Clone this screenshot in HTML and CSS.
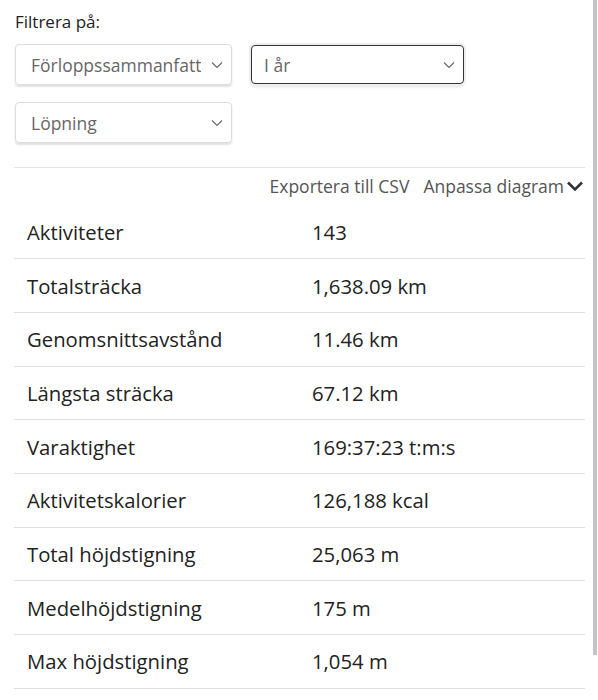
FILE: index.html
```html
<!DOCTYPE html>
<html lang="sv">
<head>
  <meta charset="UTF-8">
  <title>Rapporter</title>
  <meta name="viewport" content="width=device-width, initial-scale=1.0">
  <link rel="stylesheet" href="styles.css">
</head>
<body>

<div class="filters">
  <div class="filter-label">Filtrera på:</div>
  <div class="select-list">
    <div class="select">
      <span class="select-text">Förloppssammanfatt</span>
      <svg class="caret" width="12" height="8" viewBox="0 0 12 8"><path d="M1 1.5l5 5 5-5" fill="none" stroke="#666" stroke-width="1.1"/></svg>
    </div>
    <div class="select focused">
      <span class="select-text">I år</span>
      <svg class="caret" width="12" height="8" viewBox="0 0 12 8"><path d="M1 1.5l5 5 5-5" fill="none" stroke="#666" stroke-width="1.1"/></svg>
    </div>
    <div class="select">
      <span class="select-text">Löpning</span>
      <svg class="caret" width="12" height="8" viewBox="0 0 12 8"><path d="M1 1.5l5 5 5-5" fill="none" stroke="#666" stroke-width="1.1"/></svg>
    </div>
  </div>
</div>

<div class="toolbar">
  <a class="tool-link">Exportera till CSV</a>
  <a class="tool-link">Anpassa diagram
    <svg class="tool-caret" width="18" height="12" viewBox="0 0 18 12"><path d="M2 2.5l7 7 7-7" fill="none" stroke="#333" stroke-width="2.6"/></svg>
  </a>
</div>

<table class="stats">
  <tr><td>Aktiviteter</td><td>143</td></tr>
  <tr><td>Totalsträcka</td><td>1,638.09 km</td></tr>
  <tr><td>Genomsnittsavstånd</td><td>11.46 km</td></tr>
  <tr><td>Längsta sträcka</td><td>67.12 km</td></tr>
  <tr><td>Varaktighet</td><td>169:37:23 t:m:s</td></tr>
  <tr><td>Aktivitetskalorier</td><td>126,188 kcal</td></tr>
  <tr><td>Total höjdstigning</td><td>25,063 m</td></tr>
  <tr><td>Medelhöjdstigning</td><td>175 m</td></tr>
  <tr><td>Max höjdstigning</td><td>1,054 m</td></tr>
</table>

<div class="scroll-thumb"></div>

</body>
</html>
```

FILE: styles.css
```css
* { box-sizing: border-box; }
body {
  margin: 0;
  padding: 9px 13px 0 14px;
  background: #fff;
  color: #222;
  font-family: "Open Sans", Arial, sans-serif;
  overflow: hidden;
}
.filters {
  padding-left: 1px;
}
.filter-label {
  font-size: 17px;
  line-height: 26px;
  color: #222;
  margin-bottom: 9px;
}
.select-list {
  display: flex;
  flex-wrap: wrap;
  column-gap: 19px;
  row-gap: 17px;
}
.select {
  width: 217px;
  height: 41px;
  border: 1px solid #dcdcdc;
  border-radius: 4px;
  box-shadow: 0 2px 2px rgba(0, 0, 0, 0.12);
  display: flex;
  align-items: center;
  justify-content: space-between;
  padding: 0 8px 0 15px;
  font-size: 17.5px;
  color: #666;
}
.select.focused {
  width: 213px;
  height: 39px;
  margin-top: 1px;
  border: 1.5px solid #333;
  padding-left: 12px;
  box-shadow: 0 0 0 2px #eee, 0 3px 3px rgba(0, 0, 0, 0.12);
}
.select-text {
  white-space: nowrap;
  overflow: hidden;
}
.caret {
  flex-shrink: 0;
}
.toolbar {
  margin-top: 24px;
  border-top: 1px solid #e4e4e4;
  display: flex;
  justify-content: flex-end;
  gap: 14px;
  padding: 5px 0 0;
  font-size: 17.5px;
  line-height: 26px;
  color: #555;
}
.tool-link {
  display: flex;
  align-items: center;
  gap: 2px;
}
.tool-caret {
  margin-right: 1px;
}
.stats {
  width: 100%;
  border-collapse: collapse;
  margin-top: 6px;
  font-size: 20.3px;
  color: #222;
}
.stats td {
  height: 53.7px;
  border-bottom: 1px solid #e0e0e0;
  padding: 0 0 0 13px;
  vertical-align: middle;
}
.stats td:first-child {
  width: 285px;
}
.scroll-thumb {
  position: fixed;
  top: 0;
  right: 1px;
  width: 4px;
  height: 655px;
  background: #c4c4c4;
}
```
